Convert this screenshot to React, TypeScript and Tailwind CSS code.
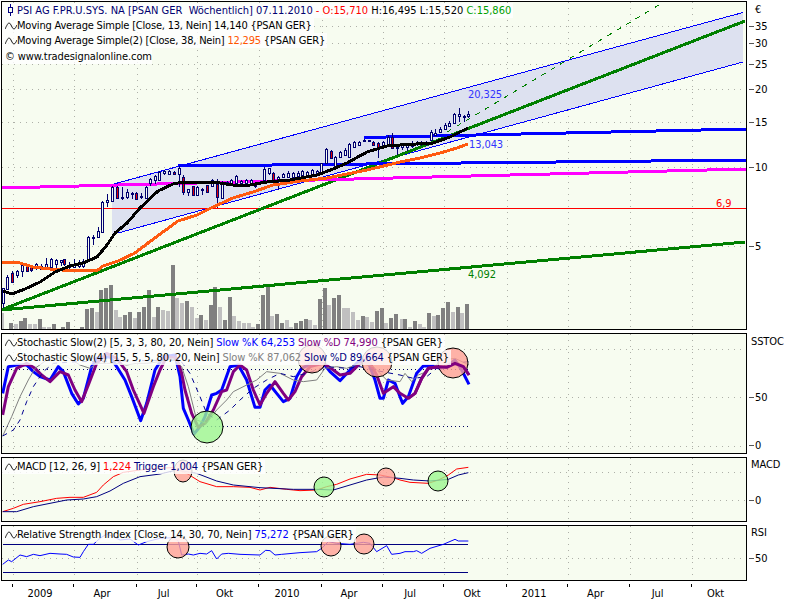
import React from "react";

type P = [number, number];
const zp = (l: number[], x0: number, y0: number): P[] => {
  const o: P[] = [];
  for (let i = 0; i < l.length; i += 2) o.push([x0 + l[i] / 3, y0 + l[i + 1] / 3]);
  return o;
};
const str = (p: P[]) => p.map((q) => q.join(",")).join(" ");

const VGRID = [13, 74, 137, 197, 259, 322, 383, 444, 507, 568, 630, 692];

const candles: number[][] = [
[3,288,308,288,303,0],[7,275,290,277,289,0],[12,271,282,273,282,1],[17,270,278,271,275,0],[22,265,277,265,271,0],[27,264,272,264,271,1],[31,266,272,267,270,1],[36,263,270,264,268,0],[41,264,270,266,269,0],[46,258,270,264,267,0],[51,258,268,259,267,0],[56,259,270,260,264,0],[61,260,266,260,262,0],[64,259,266,259,264,1],[69,262,270,265,267,0],[74,259,268,264,267,0],[79,260,268,263,266,0],[83,259,268,261,266,0],[88,236,261,237,261,0],[93,235,245,237,238,0],[98,227,238,231,237,0],[102,201,232,202,232,0],[107,194,207,200,202,0],[112,186,201,187,201,0],[117,186,198,187,198,1],[122,187,200,197,198,0],[127,189,199,192,197,0],[132,192,199,193,194,0],[136,192,199,193,199,1],[141,193,199,196,197,0],[146,186,199,187,198,0],[150,178,186,179,183,0],[155,175,184,176,180,0],[159,171,181,172,180,0],[164,170,175,171,173,0],[169,170,175,171,174,0],[174,171,175,172,174,1],[179,166,187,168,174,0],[183,175,195,177,192,1],[188,189,196,189,192,0],[193,186,196,186,195,1],[197,186,196,187,195,0],[202,188,195,189,190,0],[207,185,192,185,192,1],[212,179,186,180,186,0],[217,179,208,184,197,1],[222,181,199,182,198,0],[227,181,185,182,184,0],[231,179,184,180,183,0],[236,175,184,176,183,0],[241,180,184,181,183,0],[246,179,184,180,183,0],[251,179,184,180,183,0],[255,183,188,183,186,0],[260,181,184,182,183,0],[264,167,180,169,180,0],[269,168,175,168,173,0],[273,172,181,173,180,1],[278,176,190,177,180,0],[283,173,178,174,177,0],[288,171,177,173,177,0],[293,172,177,173,177,0],[298,171,177,173,176,0],[302,170,176,171,175,0],[307,171,176,172,175,0],[312,169,175,170,174,0],[317,170,175,171,174,0],[321,163,174,163,173,0],[326,148,164,149,163,0],[331,150,159,151,158,1],[335,156,168,157,167,0],[340,151,158,152,157,0],[345,148,156,150,155,0],[349,143,157,144,157,0],[354,141,148,142,147,0],[359,141,146,142,145,0],[364,139,142,140,141,0],[369,140,142,140,141,1],[373,141,146,142,145,1],[378,142,158,143,148,1],[383,141,148,142,147,0],[388,135,147,137,145,0],[392,133,148,137,148,1],[397,146,155,147,148,0],[402,144,150,145,147,0],[407,143,151,144,147,0],[412,141,148,143,146,0],[417,141,146,142,143,0],[421,141,146,142,143,0],[426,141,146,142,143,0],[431,130,141,132,140,0],[435,129,136,133,135,0],[440,127,133,129,132,0],[445,123,130,125,129,0],[449,121,127,123,126,0],[454,113,124,114,123,0],[459,108,122,114,116,0],[464,115,122,116,117,0],[468,111,118,114,116,0],
];

const volA: number[][] = [[5,430,1],[33,460,0],[47,463,1],[63,453,0],[75,445,0],[90,462,1],[105,462,1],[120,447,0],[133,470,1],[147,472,1],[161,462,0],[190,470,0],[204,457,0],[245,470,0],[260,417,0],[275,414,0],[290,425,1],[304,360,0],[318,355,0],[333,345,0],[348,420,1],[360,442,1],[375,435,0],[390,425,0],[405,443,1],[418,425,0],[433,410,0],[447,360,0],[462,440,1],[475,410,0],[490,420,1],[504,422,1],[519,285,0],[531,383,1],[546,400,1],[560,392,0],[575,412,1],[590,443,1],[603,435,0],[618,450,1],[633,405,0],[645,352,0],[660,410,1],[675,450,0],[690,380,0],[703,437,1],[718,452,1],[733,458,1],[747,460,1],[760,470,1],[774,462,0],[789,375,0],[803,350,0],[817,438,1],[831,432,0],[846,458,0],[860,450,1],[874,470,1],[888,460,0],[903,453,0],[917,447,0],[931,450,1],[946,465,1],[960,387,0],[975,355,0],[987,405,1],[1002,385,0],[1017,375,0],[1031,413,1],[1045,413,1],[1059,425,1],[1074,450,1],[1088,437,0],[1102,440,1],[1116,455,1],[1131,423,0],[1145,413,0],[1159,458,1],[1173,445,0],[1188,432,0],[1205,447,1],[1215,447,0],[1229,470,1],[1245,453,0],[1260,462,1],[1272,471,1],[1287,430,0],[1301,437,1],[1315,435,0],[1329,413,0],[1344,396,0],[1359,426,1],[1374,410,0],[1386,429,1],[1401,402,0]];

const black: P[] = [[3,291],[12,294],[25,289],[40,282],[55,272],[70,266],[83,263],[97,257],[107,245],[115,233],[127,223],[140,208],[158,191],[173,184],[183,182],[213,182],[233,185],[250,185],[267,182],[290,180],[317,175],[333,169],[347,163],[367,152],[387,146],[400,145],[433,143],[450,137],[468,128]];
const orange: P[] = [[2,262],[20,263],[33,267],[50,269],[73,271],[98,270],[103,266],[118,261],[135,253],[148,243],[163,232],[178,221],[197,215],[213,207],[233,198],[253,192],[273,185],[300,181],[327,178],[367,170],[400,162],[420,158],[440,153],[457,148],[468,144]];

const K1 = [...zp([8,190,25,110,50,105,80,105,100,125,120,140,150,150,175,110,190,125,215,190,235,222,250,205,275,110,290,85,330,80,350,110,375,150,395,200,422,272,440,220,465,120,490,80,525,75,540,140,550,235,565,270,582,312,600,290,615,260,635,195,650,190,665,180,690,110,715,105,740,150,765,232,780,232,795,180,810,165,830,190,850,215,870,205,890,140,905,115,935,100,970,100,990,125,1020,152,1050,120,1075,95,1100,85,1125,150,1140,205,1150,205,1165,150,1185,160,1200,200],0,330), ...zp([8,220,25,200,50,130,70,108,100,108,120,115,140,110,165,90,185,120,207,163],400,330)];
const D1 = [...zp([8,255,25,170,50,115,80,100,105,115,125,135,150,155,180,125,205,135,225,180,245,215,265,165,290,100,320,70,350,85,380,125,400,180,432,250,460,170,480,120,500,80,530,85,545,130,555,180,575,250,595,292,615,280,640,240,665,185,680,180,700,125,720,105,740,120,760,180,780,225,800,190,825,155,850,190,865,210,885,185,905,140,930,110,970,100,1000,120,1020,135,1050,130,1080,100,1110,100,1130,135,1150,190,1180,170,1200,190],0,330), ...zp([25,205,45,190,65,145,85,115,115,110,140,112,165,100,190,110,207,135],400,330)];
const K2 = [...zp([8,318,35,260,60,200,85,150,105,115,140,90,200,80,240,105,270,115,290,100,320,100,350,100,380,105,410,100,440,100,480,95,520,85,545,110,565,170,590,270,620,280,650,240,680,210,700,185,740,165,770,150,800,125,840,130,880,150,910,155,950,150,975,115,1010,110,1040,115,1080,100,1120,110,1160,150,1200,155],0,330), ...zp([15,130,35,155,55,135,80,125,100,110,130,90,165,85,207,105],400,330)];
const D2 = [...zp([8,318,40,300,60,270,80,215,100,170,130,125,160,100,230,95,540,90,570,130,600,200,620,250,650,270,690,240,720,210,760,175,800,150,840,130,880,140,920,130,980,110,1040,115,1080,110,1120,120,1200,135],0,330), ...zp([40,145,80,140,110,115,150,100,207,95],400,330)];

const macdR = [...zp([8,170,40,160,70,148,120,140,170,130,210,127,250,127,290,112,310,90,340,65,370,52,420,45,470,40,520,38,560,55,600,80,650,95,700,95,750,97,780,105,810,97,860,103,900,107,950,105,980,95,1010,88,1050,72,1100,58,1140,60,1180,68,1200,75],0,455), ...zp([30,82,85,85,115,75,145,60,170,42,205,37],400,455)];
const macdB = [...zp([8,170,50,170,100,155,150,145,200,135,250,132,290,125,330,108,370,85,420,65,480,57,530,45,590,55,650,78,700,90,780,98,880,103,950,103,1000,105,1050,90,1100,75,1150,66,1200,70],0,455), ...zp([40,75,90,78,145,73,175,60,205,53],400,455)];
const rsi = [...zp([8,328,25,315,35,320,60,300,80,305,100,298,120,302,150,295,180,297,200,298,220,306,240,307,250,290,265,268,280,268,300,250,320,237,340,245,360,255,390,252,415,270,440,260,480,250,520,248,535,258,545,300,565,297,580,300,600,295,620,297,635,287,650,312,665,297,685,295,720,298,780,300,797,286,810,287,825,300,845,298,900,293,950,290,965,280,985,260,1010,265,1050,268,1090,262,1110,265,1130,290,1160,272,1175,298,1200,295],0,455), ...zp([15,290,40,290,50,287,65,295,90,280,130,268,165,253,175,258,205,258],400,455)];

const Grid = ({ y0, y1, hs }: { y0: number; y1: number; hs: number[] }) => (
  <g stroke="#aeb0a8" strokeWidth={1} strokeDasharray="1 5" shapeRendering="crispEdges">
    {VGRID.map((x) => <line key={x} x1={x + 0.5} x2={x + 0.5} y1={y0} y2={y1} />)}
    {hs.map((y) => <line key={y} x1={2} x2={746} y1={y + 0.5} y2={y + 0.5} />)}
  </g>
);

const Line = ({ p, c, w = 1, dash }: { p: P[]; c: string; w?: number; dash?: string }) => (
  <polyline points={str(p)} fill="none" stroke={c} strokeWidth={w} strokeDasharray={dash} strokeLinejoin="round" />
);

const Wave = () => (
  <svg width="12" height="8" viewBox="0 0 12 8" className="shrink-0" fill="none" stroke="#111" strokeWidth="1">
    <path d="M0 7 C2 3 3 1 4 1 C6 1 7 7 9 7 C10 7 11 5 12 3" />
  </svg>
);
const CandleIcon = () => (
  <svg width="12" height="13" viewBox="0 0 12 13" className="shrink-0" fill="none" stroke="#000080" strokeWidth="1" shapeRendering="crispEdges">
    <path d="M5.5 0V12" />
    <rect x="3.5" y="3.5" width="4" height="5" fill="#f7fcf0" />
  </svg>
);

const Row = ({ icon, children }: { icon: React.ReactNode; children: React.ReactNode }) => (
  <div className="flex items-center h-[15px] pl-[3px] pr-[2px] bg-white/80 whitespace-pre">
    {icon}
    <span>{children}</span>
  </div>
);

const Legends = ({ children }: { children: React.ReactNode }) => (
  <div className="absolute left-0 top-0 flex flex-col items-start pt-px">{children}</div>
);

const Mark = ({ x, y, r, green, ry }: { x: number; y: number; r: number; ry?: number; green?: boolean }) => (
  <ellipse cx={x} cy={y} rx={r} ry={ry ?? r} fill={green ? "#9cf590" : "#ff9f95"} fillOpacity={0.8} stroke="#000" strokeWidth={1} />
);

const Tick = ({ label, mt }: { label: string; mt: string }) => (
  <div className={`flex items-center h-[14px] ${mt}`}>
    <span className="w-[5px] h-px bg-[#555] ml-[2px] mr-px" />
    <span>{label}</span>
  </div>
);

const cellW = ["w-[61px]","w-[63px]","w-[60px]","w-[62px]","w-[63px]","w-[61px]","w-[61px]","w-[63px]","w-[61px]","w-[62px]","w-[62px]","w-[54px]"];
const months = ["2009","Apr","Jul","Okt","2010","Apr","Jul","Okt","2011","Apr","Jul","Okt"];

export default function App() {
  return (
    <div className="w-[800px] h-[600px] bg-white pl-px pt-px text-[11px] tracking-[-0.1px] leading-[15px] text-black overflow-hidden [font-family:'DejaVu_Sans',sans-serif] [font-stretch:condensed]">
      {/* Price panel */}
      <div className="flex">
        <div className="relative w-[746px] h-[329px] border border-black bg-[#f7fcf0] overflow-hidden">
          <svg className="absolute inset-0" width="744" height="327" viewBox="2 2 744 327">
            <Grid y0={2} y1={329} hs={[26, 43, 64, 89, 122, 167, 246]} />
            <polygon points="112,184 743,12 743,62 118,233 112,235" fill="#dde1f0" />
            <g shapeRendering="crispEdges">
              <Line p={[[112, 184.5], [743, 12.5]]} c="#0000ff" />
              <Line p={[[118, 233], [743, 62]]} c="#0000ff" />
              <Line p={[[447, 132], [664, 2]]} c="#008000" dash="5 6" />
              {volA.map(([z, t, l], i) => (
                <rect key={i} x={z / 3 - 2} y={170 + t / 3} width={4} height={329 - 170 - t / 3} fill={l ? "#c0c0c0" : "#808080"} />
              ))}
              <Line p={[[2, 208.5], [746, 208.5]]} c="#ff0000" />
              <Line p={[[1, 310], [745, 21]]} c="#008000" w={3} />
              <Line p={[[1, 310], [745, 242]]} c="#008000" w={3} />
              <Line p={[[1, 188], [746, 169]]} c="#ff00ff" w={3} />
              <Line p={[[178, 166], [746, 160]]} c="#0000ff" w={3} />
              <Line p={[[364, 137.5], [746, 129]]} c="#0000ff" w={3} />
              {candles.map(([x, wt, wb, bt, bb, red]) => (
                <g key={x}>
                  <line x1={x + 0.5} x2={x + 0.5} y1={wt} y2={wb} stroke="#000070" />
                  <rect x={x - 0.5} y={bt + 0.5} width={2} height={Math.max(bb - bt, 1)} fill={red ? "#e00000" : "#f7fcf0"} stroke="#000070" />
                </g>
              ))}
              <Line p={orange} c="#ff5a10" w={3} />
              <Line p={black} c="#000000" w={3} />
            </g>
          </svg>
          <Legends>
            <Row icon={<CandleIcon />}>
              <span className="tracking-normal">
                <span className="text-[#000070]">{"PSI AG F.PR.U.SYS. NA [PSAN GER  Wöchentlich] 07.11.2010 "}</span>
                <span className="text-[#ff0000]">- O:15,710</span>
                <span className="text-black"> H:16,495 L:15,520 </span>
                <span className="text-[#00a000]">C:15,860</span>
              </span>
            </Row>
            <Row icon={<Wave />}><span className="tracking-[-0.2px]">Moving Average Simple [Close, 13, Nein] 14,140 {"{PSAN GER}"}</span></Row>
            <Row icon={<Wave />}><span className="tracking-[-0.2px]">Moving Average Simple(2) [Close, 38, Nein] <span className="text-[#ff5500]">12,295</span> {"{PSAN GER}"}</span></Row>
            <div className="h-[16px] pt-px pl-[3px] bg-white/80 whitespace-pre">© www.tradesignalonline.com</div>
          </Legends>
          <span className="absolute left-[466px] top-[85px] text-[#3333ff]">20,325</span>
          <span className="absolute left-[467px] top-[135px] text-[#3333ff]">13,043</span>
          <span className="absolute left-[714px] top-[194px] text-[#ff0000]">6,9</span>
          <span className="absolute left-[466px] top-[265px] text-[#008000]">4,092</span>
        </div>
        <div className="flex flex-col">
          <div className="h-[14px] mt-px pl-[8px]">€</div>
          <Tick label="35" mt="mt-[3px]" />
          <Tick label="30" mt="mt-[3px]" />
          <Tick label="25" mt="mt-[7px]" />
          <Tick label="20" mt="mt-[11px]" />
          <Tick label="15" mt="mt-[19px]" />
          <Tick label="10" mt="mt-[31px]" />
          <Tick label="5" mt="mt-[65px]" />
        </div>
      </div>

      {/* Stochastic */}
      <div className="flex mt-[3px]">
        <div className="relative w-[746px] h-[121px] border border-black bg-[#f7fcf0] overflow-hidden">
          <svg className="absolute inset-0" width="744" height="119" viewBox="2 334 744 119">
            <Grid y0={334} y1={453} hs={[349, 397, 446]} />
            <g stroke="#000060" strokeDasharray="1 3" shapeRendering="crispEdges">
              <line x1={3} x2={468} y1={369.5} y2={369.5} />
              <line x1={3} x2={468} y1={426.5} y2={426.5} />
            </g>
            <Line p={K1} c="#0000ff" w={3} />
            <Line p={D1} c="#800080" w={3} />
            <Line p={K2} c="#808080" />
            <Line p={D2} c="#000090" dash="5 5" />
            <Mark x={207} y={427} r={16} green />
            <Mark x={312} y={359} r={14} />
            <Mark x={377} y={362} r={15} />
            <Mark x={453} y={363} r={15} />
            <Line p={D1.slice(-9)} c="#800080" w={3} />
          </svg>
          <Legends>
            <Row icon={<Wave />}>Stochastic Slow(2) [5, 3, 3, 80, 20, Nein] <span className="text-[#0000ff]">Slow %K 64,253</span> <span className="text-[#800080]">Slow %D 74,990</span> {"{PSAN GER}"}</Row>
            <Row icon={<Wave />}>Stochastic Slow(4) [15, 5, 5, 80, 20, Nein] <span className="text-[#808080]">Slow %K 87,062</span> <span className="text-[#000080]">Slow %D 89,664</span> {"{PSAN GER}"}</Row>
          </Legends>
        </div>
        <div className="flex flex-col">
          <div className="h-[14px] mt-px pl-[4px]">SSTOC</div>
          <Tick label="50" mt="mt-[42px]" />
          <Tick label="0" mt="mt-[34px]" />
        </div>
      </div>

      {/* MACD */}
      <div className="flex mt-[3px]">
        <div className="relative w-[746px] h-[65px] border border-black bg-[#f7fcf0] overflow-hidden">
          <svg className="absolute inset-0" width="744" height="63" viewBox="2 458 744 63">
            <Grid y0={458} y1={521} hs={[472]} />
            <line x1={2} x2={468} y1={500.5} y2={500.5} stroke="#555" strokeDasharray="1 3" shapeRendering="crispEdges" />
            <line x1={468} x2={746} y1={500.5} y2={500.5} stroke="#aeb0a8" strokeDasharray="1 5" shapeRendering="crispEdges" />
            <Line p={macdR} c="#ff0000" />
            <Line p={macdB} c="#000080" />
            <Mark x={183} y={471} r={9} ry={11} />
            <Mark x={324} y={487} r={10} green />
            <Mark x={386} y={477} r={9} />
            <Mark x={438} y={481} r={10} green />
          </svg>
          <Legends>
            <Row icon={<Wave />}>MACD [12, 26, 9] <span className="text-[#ff0000]">1,224</span> <span className="text-[#000080]">Trigger 1,004</span> {"{PSAN GER}"}</Row>
          </Legends>
        </div>
        <div className="flex flex-col">
          <div className="h-[14px] pl-[4px]">MACD</div>
          <Tick label="0" mt="mt-[22px]" />
        </div>
      </div>

      {/* RSI */}
      <div className="flex mt-[3px]">
        <div className="relative w-[746px] h-[56px] border border-black bg-[#f7fcf0] overflow-hidden">
          <svg className="absolute inset-0" width="744" height="54" viewBox="2 526 744 54">
            <Grid y0={526} y1={580} hs={[558]} />
            <g stroke="#000080" shapeRendering="crispEdges">
              <line x1={3} x2={468} y1={544.5} y2={544.5} />
              <line x1={3} x2={468} y1={572.5} y2={572.5} />
            </g>
            <Line p={rsi} c="#0000ff" />
            <Mark x={178} y={547} r={11} />
            <Mark x={331} y={546} r={10} />
            <Mark x={364} y={544} r={10} />
          </svg>
          <Legends>
            <Row icon={<Wave />}>Relative Strength Index [Close, 14, 30, 70, Nein] <span className="text-[#0000ff]">75,272</span> {"{PSAN GER}"}</Row>
          </Legends>
        </div>
        <div className="flex flex-col">
          <div className="h-[14px] pl-[4px]">RSI</div>
          <Tick label="50" mt="mt-[12px]" />
        </div>
      </div>

      {/* Time axis */}
      <div className="flex pl-[11px] mt-[3px]">
        {months.map((m, i) => (
          <div key={i} className={`${cellW[i]} shrink-0`}>
            <div className="h-[3px] w-px bg-black" />
            <div className="text-center pr-[5px] leading-[13px]">{m}</div>
          </div>
        ))}
      </div>
    </div>
  );
}
